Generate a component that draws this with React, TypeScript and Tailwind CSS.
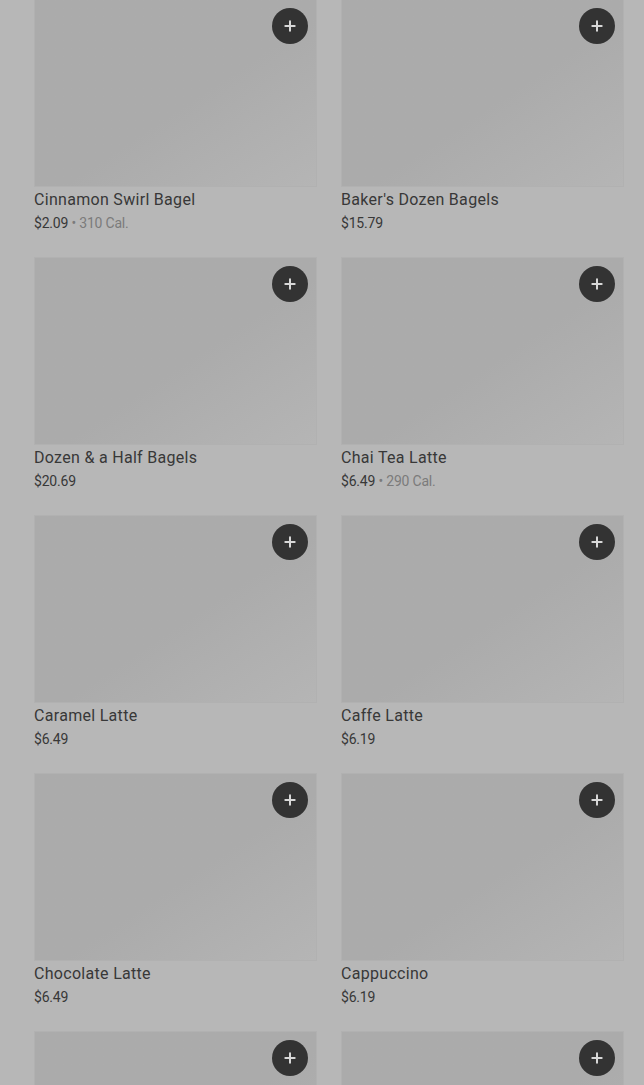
import { Plus } from "lucide-react";

interface Item {
  name: string;
  price: string;
  cal?: string;
}

const items: Item[] = [
  { name: "Cinnamon Swirl Bagel", price: "$2.09", cal: "310 Cal." },
  { name: "Baker's Dozen Bagels", price: "$15.79" },
  { name: "Dozen & a Half Bagels", price: "$20.69" },
  { name: "Chai Tea Latte", price: "$6.49", cal: "290 Cal." },
  { name: "Caramel Latte", price: "$6.49" },
  { name: "Caffe Latte", price: "$6.19" },
  { name: "Chocolate Latte", price: "$6.49" },
  { name: "Cappuccino", price: "$6.19" },
  { name: "Iced Latte", price: "$6.19" },
  { name: "Iced Mocha", price: "$6.49" },
];

function ItemCard({ item }: { item: Item }) {
  return (
    <div className="pb-[24px]">
      <div className="relative h-[188px] bg-gradient-to-br from-[#ababab] from-55% to-[#b5b5b5] border border-[#b1b1b1]">
        <button className="absolute top-[8px] right-[8px] w-9 h-9 rounded-full bg-[#333333] flex items-center justify-center text-[#d8d8d8]">
          <Plus className="w-4 h-4" strokeWidth={3} />
        </button>
      </div>
      <div className="mt-[3px] text-[16px] leading-5 font-normal text-[#383838] tracking-[0.3px]">
        {item.name}
      </div>
      <div className="mt-[3px] text-[14px] leading-5 text-[#383838] tracking-[-0.2px]">
        {item.price}
        {item.cal && (
          <span className="text-[#7b7b7b]"> • {item.cal}</span>
        )}
      </div>
    </div>
  );
}

export default function App() {
  return (
    <div
      className="h-[1085px] overflow-hidden bg-[#b7b7b7] pl-[34px] pr-[20px]"
      style={{ fontFamily: "Roboto, 'Liberation Sans', sans-serif" }}
    >
      <div className="grid grid-cols-2 gap-x-6 -mt-[1px]">
        {items.map((item) => (
          <ItemCard key={item.name} item={item} />
        ))}
      </div>
    </div>
  );
}
